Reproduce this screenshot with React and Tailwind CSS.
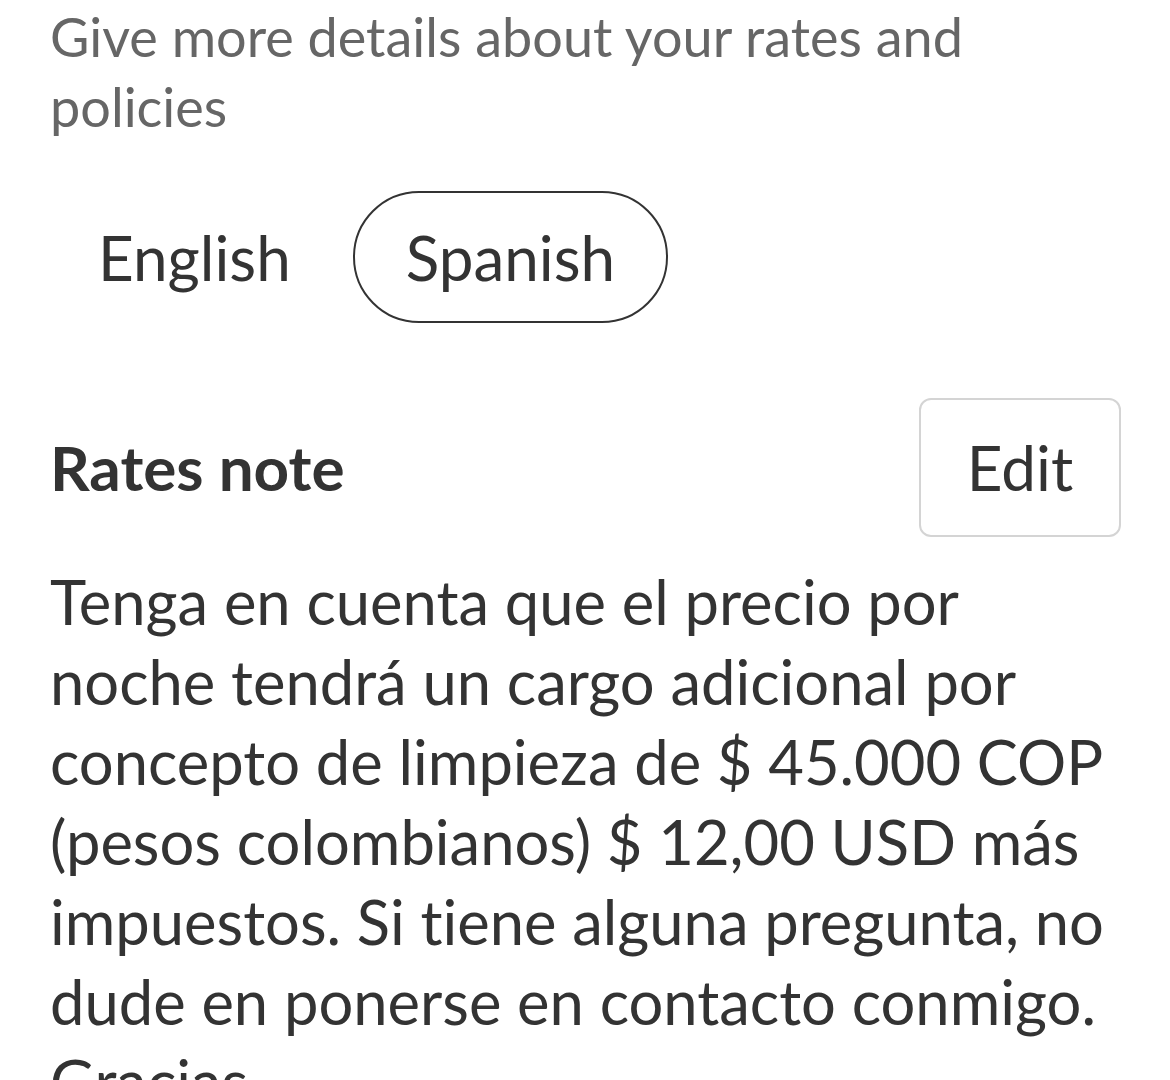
export default function App() {
  return (
    <div className="min-h-screen bg-white pl-[50px] pr-[48px] font-['Lato',sans-serif] [font-variant-ligatures:none]">
      <p className="mt-[2px] text-[54px] leading-[70px] text-[#666]">
        Give more details about your rates and policies
      </p>

      <div className="mt-[49px] flex items-center gap-[14px]">
        <button className="h-[132px] rounded-full px-[48px] text-[62px] text-[#333]">English</button>
        <button className="h-[132px] rounded-full border-2 border-[#333] px-[51px] text-[62px] text-[#333]">
          Spanish
        </button>
      </div>

      <div className="mt-[75px] flex items-center justify-between">
        <h2 className="text-[62px] font-bold text-[#333]">Rates note</h2>
        <button className="mr-[1px] h-[139px] w-[202px] rounded-[12px] border-2 border-[#d4d4d4] text-[62px] text-[#333]">
          Edit
        </button>
      </div>

      <p className="mt-[24px] text-[61.5px] leading-[80px] text-[#333]">
        Tenga en cuenta que el precio por noche tendrá un cargo adicional por concepto de limpieza de $ 45.000 COP
        (pesos colombianos) $ 12,00 USD más impuestos. Si tiene alguna pregunta, no dude en ponerse en contacto
        conmigo. Gracias
      </p>
    </div>
  );
}
